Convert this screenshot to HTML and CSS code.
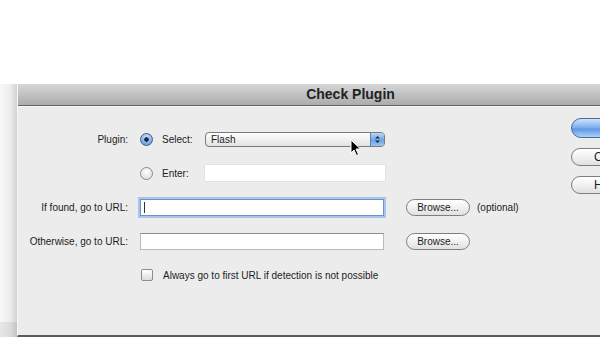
FILE: index.html
```html
<!DOCTYPE html>
<html lang="en">
<head>
  <meta charset="UTF-8" />
  <title>Check Plugin</title>
  <link rel="stylesheet" href="styles.css">
</head>
<body>
  <div class="screen">
    <div class="stage">
      <div class="side"></div>
      <div class="dialog">
        <div class="titlebar">Check Plugin</div>
        <div class="dialog-body">
          <div class="form">
            <div class="label">Plugin:</div>
            <div class="field">
              <span class="radio checked"></span>
              <span class="choice-label">Select:</span>
              <div class="select">
                <span class="select-text">Flash</span>
                <span class="stepper">
                  <svg width="7" height="9" viewBox="0 0 7 9"><path d="M1 3.5 L3.5 1 L6 3.5 Z M1 5.5 L3.5 8 L6 5.5 Z" fill="#1d2f4a"/></svg>
                </span>
              </div>
            </div>

            <div class="label"></div>
            <div class="field">
              <span class="radio"></span>
              <span class="choice-label">Enter:</span>
              <input type="text" class="text-input enter" />
            </div>

            <div class="label">If found, go to URL:</div>
            <div class="field">
              <div class="text-input url focused"><span class="caret"></span></div>
              <button class="pill browse">Browse...</button>
              <span class="hint">(optional)</span>
            </div>

            <div class="label">Otherwise, go to URL:</div>
            <div class="field">
              <div class="text-input url"></div>
              <button class="pill browse">Browse...</button>
            </div>

            <div class="label"></div>
            <div class="field">
              <span class="checkbox"></span>
              <span class="check-label">Always go to first URL if detection is not possible</span>
            </div>
          </div>
          <div class="actions">
            <button class="pill action default">OK</button>
            <button class="pill action">Cancel</button>
            <button class="pill action">Help</button>
          </div>
        </div>
      </div>
    </div>
    <svg class="cursor" width="12" height="18" viewBox="0 0 12 18">
      <path d="M1 1 L1 14 L4 11 L6.5 16.5 L8.5 15.5 L6 10 L10.5 10 Z" fill="#000" stroke="#fff" stroke-width="1"/>
    </svg>
  </div>
</body>
</html>
```

FILE: styles.css
```css
body {
  margin: 0;
  padding: 0;
  background-color: #fff;
  font-family: "Liberation Sans", Arial, sans-serif;
  font-size: 10px;
  color: #1c1c1c;
  overflow: hidden;
}
.screen {
  position: relative;
  width: 600px;
  height: 337px;
  overflow: hidden;
  background: linear-gradient(to bottom, #fff 80px, #f7f7f7);
}
.stage {
  display: flex;
  margin-top: 84px;
  height: 253px;
}
.side {
  width: 17px;
  flex: none;
  background:
    linear-gradient(to bottom, transparent 238px, rgba(0, 0, 0, 0.07) 238px),
    linear-gradient(to right, #f8f8f8, #ececec 60%, #d2d2d2);
}
.dialog {
  width: 666px;
  flex: none;
  display: flex;
  flex-direction: column;
  background-color: #ececec;
  border-left: 1px solid #f8f8f8;
  border-bottom: 2px solid #5a5a5a;
  box-sizing: border-box;
}
.titlebar {
  height: 21px;
  line-height: 21px;
  text-align: center;
  font-size: 14px;
  font-weight: bold;
  color: #222;
  background: linear-gradient(to bottom, #d6d6d6, #acacac);
  border-bottom: 1px solid #666;
}
.dialog-body {
  flex: 1;
  display: flex;
  border-top: 1px solid #f6f6f6;
}
.form {
  width: 553px;
  padding-top: 15px;
  display: grid;
  grid-template-columns: 110px 1fr;
  grid-auto-rows: 34px;
  column-gap: 12px;
  align-items: center;
}
.label {
  text-align: right;
}
.field {
  display: flex;
  align-items: center;
}
.radio {
  width: 13px;
  height: 13px;
  border-radius: 50%;
  border: 1px solid #8a8a8a;
  box-sizing: border-box;
  background: radial-gradient(circle at 50% 35%, #fff, #d8d8d8);
}
.radio.checked {
  border-color: #3b5f8f;
  background: radial-gradient(circle, #1a2a44 0 2px, transparent 2.5px),
    radial-gradient(circle at 50% 30%, #cfe3fb, #6a9edc 80%);
}
.choice-label {
  width: 43px;
  margin-left: 9px;
}
.select {
  width: 180px;
  height: 15px;
  display: flex;
  align-items: center;
  justify-content: space-between;
  border: 1px solid #7a7a7a;
  border-radius: 4px;
  box-sizing: border-box;
  background: linear-gradient(to bottom, #fff, #f0f0f0 50%, #e2e2e2);
  overflow: hidden;
}
.select-text {
  padding-left: 5px;
}
.stepper {
  width: 13px;
  height: 100%;
  display: flex;
  align-items: center;
  justify-content: center;
  background: linear-gradient(to bottom, #b9d6f7, #6fa3e3 55%, #9cc6f4);
  border-left: 1px solid #5f82b0;
}
.text-input {
  height: 18px;
  border: 1px solid #b8b8b8;
  border-top-color: #8e8e8e;
  background-color: #fff;
  box-sizing: border-box;
  padding: 0;
}
.text-input.enter {
  width: 182px;
  margin-left: -1px;
  border-color: #e2e2e2;
}
.text-input.url {
  width: 244px;
  height: 17px;
  display: flex;
  align-items: center;
}
.text-input.focused {
  border: 1px solid #6e93c4;
  box-shadow: 0 0 0 2px #a9c5ea;
}
.caret {
  width: 1px;
  height: 11px;
  margin-left: 3px;
  background-color: #333;
}
.pill {
  font-family: "Liberation Sans", Arial, sans-serif;
  font-size: 10px;
  color: #1c1c1c;
  border: 1px solid #7e7e7e;
  border-radius: 9px;
  background: linear-gradient(to bottom, #fff, #f1f1f1 50%, #e0e0e0);
  padding: 0;
}
.browse {
  width: 64px;
  height: 17px;
  margin-left: 22px;
}
.hint {
  margin-left: 7px;
}
.checkbox {
  width: 12px;
  height: 12px;
  margin-left: 1px;
  border: 1px solid #8c8c8c;
  border-radius: 2px;
  box-sizing: border-box;
  background: linear-gradient(to bottom, #fff, #dcdcdc);
}
.check-label {
  margin-left: 10px;
}
.actions {
  display: flex;
  flex-direction: column;
  gap: 10px;
  padding-top: 11px;
}
.action {
  width: 80px;
  height: 18px;
  text-align: left;
  padding-left: 22px;
  font-size: 12px;
}
.action.default {
  height: 20px;
  border-color: #4a6c9c;
  border-radius: 10px;
  background: linear-gradient(to bottom, #cfe3fa, #79acec 50%, #5d97e2 55%, #a8d0f8);
  color: transparent;
}
.cursor {
  position: absolute;
  left: 350px;
  top: 139px;
}
```
